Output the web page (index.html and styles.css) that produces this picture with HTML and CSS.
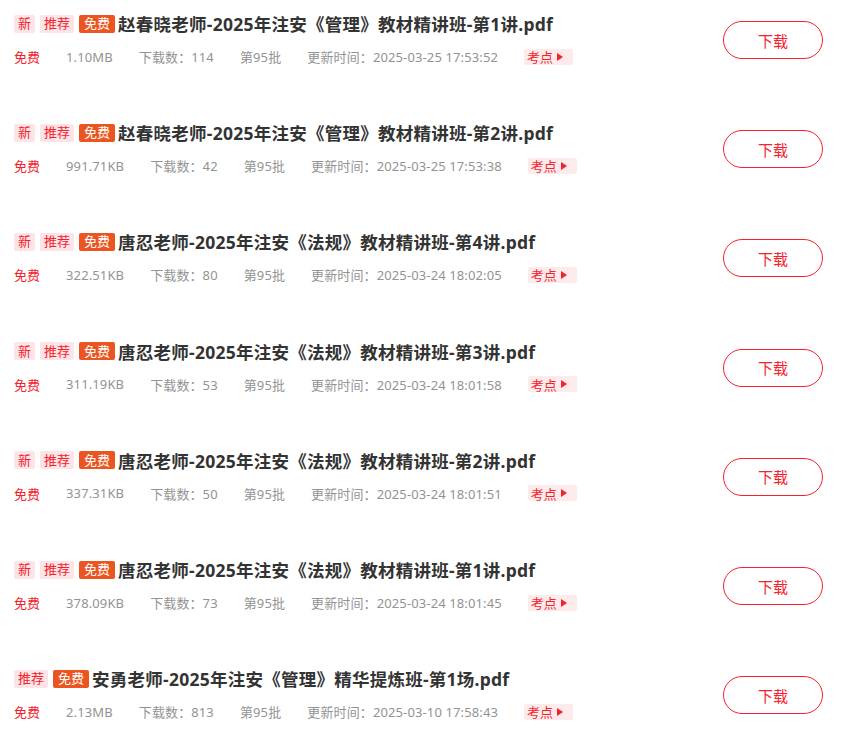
FILE: index.html
```html
<!DOCTYPE html>
<html lang="zh-CN">
<head>
<meta charset="utf-8">
<title>资料下载</title>
<link rel="stylesheet" href="styles.css">
</head>
<body>
<ul class="list">
  <li class="item">
    <div class="info">
      <div class="title-line"><span class="tag tag-pink">新</span><span class="tag tag-pink">推荐</span><span class="tag tag-orange">免费</span><span class="title">赵春晓老师-2025年注安《管理》教材精讲班-第1讲.pdf</span></div>
      <div class="meta"><span class="free">免费</span><span class="m">1.10MB</span><span class="m">下载数：114</span><span class="m">第95批</span><span class="m">更新时间：2025-03-25 17:53:52</span><span class="point">考点<svg class="tri" width="6" height="8" viewBox="0 0 6 8"><path d="M0 0L6 4L0 8Z"/></svg></span></div>
    </div>
    <a class="btn">下载</a>
  </li>
  <li class="item">
    <div class="info">
      <div class="title-line"><span class="tag tag-pink">新</span><span class="tag tag-pink">推荐</span><span class="tag tag-orange">免费</span><span class="title">赵春晓老师-2025年注安《管理》教材精讲班-第2讲.pdf</span></div>
      <div class="meta"><span class="free">免费</span><span class="m">991.71KB</span><span class="m">下载数：42</span><span class="m">第95批</span><span class="m">更新时间：2025-03-25 17:53:38</span><span class="point">考点<svg class="tri" width="6" height="8" viewBox="0 0 6 8"><path d="M0 0L6 4L0 8Z"/></svg></span></div>
    </div>
    <a class="btn">下载</a>
  </li>
  <li class="item">
    <div class="info">
      <div class="title-line"><span class="tag tag-pink">新</span><span class="tag tag-pink">推荐</span><span class="tag tag-orange">免费</span><span class="title">唐忍老师-2025年注安《法规》教材精讲班-第4讲.pdf</span></div>
      <div class="meta"><span class="free">免费</span><span class="m">322.51KB</span><span class="m">下载数：80</span><span class="m">第95批</span><span class="m">更新时间：2025-03-24 18:02:05</span><span class="point">考点<svg class="tri" width="6" height="8" viewBox="0 0 6 8"><path d="M0 0L6 4L0 8Z"/></svg></span></div>
    </div>
    <a class="btn">下载</a>
  </li>
  <li class="item">
    <div class="info">
      <div class="title-line"><span class="tag tag-pink">新</span><span class="tag tag-pink">推荐</span><span class="tag tag-orange">免费</span><span class="title">唐忍老师-2025年注安《法规》教材精讲班-第3讲.pdf</span></div>
      <div class="meta"><span class="free">免费</span><span class="m">311.19KB</span><span class="m">下载数：53</span><span class="m">第95批</span><span class="m">更新时间：2025-03-24 18:01:58</span><span class="point">考点<svg class="tri" width="6" height="8" viewBox="0 0 6 8"><path d="M0 0L6 4L0 8Z"/></svg></span></div>
    </div>
    <a class="btn">下载</a>
  </li>
  <li class="item">
    <div class="info">
      <div class="title-line"><span class="tag tag-pink">新</span><span class="tag tag-pink">推荐</span><span class="tag tag-orange">免费</span><span class="title">唐忍老师-2025年注安《法规》教材精讲班-第2讲.pdf</span></div>
      <div class="meta"><span class="free">免费</span><span class="m">337.31KB</span><span class="m">下载数：50</span><span class="m">第95批</span><span class="m">更新时间：2025-03-24 18:01:51</span><span class="point">考点<svg class="tri" width="6" height="8" viewBox="0 0 6 8"><path d="M0 0L6 4L0 8Z"/></svg></span></div>
    </div>
    <a class="btn">下载</a>
  </li>
  <li class="item">
    <div class="info">
      <div class="title-line"><span class="tag tag-pink">新</span><span class="tag tag-pink">推荐</span><span class="tag tag-orange">免费</span><span class="title">唐忍老师-2025年注安《法规》教材精讲班-第1讲.pdf</span></div>
      <div class="meta"><span class="free">免费</span><span class="m">378.09KB</span><span class="m">下载数：73</span><span class="m">第95批</span><span class="m">更新时间：2025-03-24 18:01:45</span><span class="point">考点<svg class="tri" width="6" height="8" viewBox="0 0 6 8"><path d="M0 0L6 4L0 8Z"/></svg></span></div>
    </div>
    <a class="btn">下载</a>
  </li>
  <li class="item">
    <div class="info">
      <div class="title-line"><span class="tag tag-pink">推荐</span><span class="tag tag-orange">免费</span><span class="title">安勇老师-2025年注安《管理》精华提炼班-第1场.pdf</span></div>
      <div class="meta"><span class="free">免费</span><span class="m">2.13MB</span><span class="m">下载数：813</span><span class="m">第95批</span><span class="m">更新时间：2025-03-10 17:58:43</span><span class="point">考点<svg class="tri" width="6" height="8" viewBox="0 0 6 8"><path d="M0 0L6 4L0 8Z"/></svg></span></div>
    </div>
    <a class="btn">下载</a>
  </li>
</ul>
</body>
</html>
```
FILE: styles.css
```css
* { box-sizing: border-box; }
html, body { margin: 0; padding: 0; background: #fff; }
body {
  font-family: "Noto Sans", "Noto Sans CJK SC", sans-serif;
  color: #333;
}
.list { list-style: none; margin: 0; padding: 0; }
.item {
  display: flex;
  align-items: center;
  justify-content: space-between;
  height: 109.2px;
  padding: 13px 20px 42px 14px;
}
.info { display: flex; flex-direction: column; }
.title-line {
  display: flex;
  align-items: center;
  height: 22px;
}
.tag {
  display: inline-flex;
  align-items: center;
  height: 18px;
  padding: 0 4px;
  margin-right: 5px;
  font-size: 13px;
  border-radius: 2px;
  line-height: 1;
}
.tag-pink { background: #fde4e6; color: #f5222d; }
.tag-orange { background: #ea5520; color: #fff; margin-right: 3px; padding: 0 5px; }
.title {
  font-size: 17.5px;
  font-weight: 700;
  letter-spacing: 0.25px;
  color: #333;
}
.meta {
  display: flex;
  align-items: center;
  height: 22px;
  margin-top: 11px;
  font-size: 13px;
  color: #939393;
}
.meta > span { margin-right: 26px; }
.m { letter-spacing: 0.12px; }
.free { color: #f5222d; }
.point {
  display: inline-flex;
  align-items: center;
  height: 16px;
  padding: 0 10px 0 3px;
  background: #fdeaea;
  color: #f5222d;
  border-radius: 2px;
}
.tri { fill: #f5222d; margin-left: 4px; }
.btn {
  display: flex;
  align-items: center;
  justify-content: center;
  width: 100px;
  height: 38px;
  border: 1px solid #f5222d;
  border-radius: 19px;
  color: #f5222d;
  font-size: 15px;
  flex-shrink: 0;
}
```
